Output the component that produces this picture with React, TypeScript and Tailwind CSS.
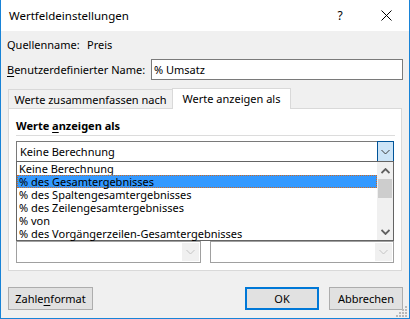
import React from 'react'

const ITEMS = [
  'Keine Berechnung',
  '% des Gesamtergebnisses',
  '% des Spaltengesamtergebnisses',
  '% des Zeilengesamtergebnisses',
  '% von',
  '% des Vorgängerzeilen-Gesamtergebnisses',
]

function Chevron({ color = '#3c3c3c', up = false, bold = false }: { color?: string; up?: boolean; bold?: boolean }) {
  return (
    <svg width="9" height="6" viewBox="0 0 9 6">
      <path
        d={up ? 'M0.5 5 L4.5 1 L8.5 5' : 'M0.5 1 L4.5 5 L8.5 1'}
        fill="none"
        stroke={color}
        strokeWidth={bold ? 1.8 : 1}
      />
    </svg>
  )
}

function DisabledCombo({ width }: { width: string }) {
  return (
    <div className={`${width} h-[22px] border border-[#a0a0a0] bg-white flex justify-end p-px`}>
      <div className="w-[17px] bg-[#f0f0f0] flex items-center justify-center">
        <Chevron color="#c4c4c4" />
      </div>
    </div>
  )
}

export default function App() {
  return (
    <div className="relative w-[410px] h-[319px] flex flex-col bg-[#f0f0f0] border-x border-b border-[#1883d7] overflow-hidden font-['Noto_Sans',sans-serif] text-[11px] text-black">
      {/* Title bar */}
      <div className="h-[31px] shrink-0 bg-white flex items-center">
        <span className="pl-[8px] flex-1 leading-[16px] text-[11.5px]">Wertfeldeinstellungen</span>
        <span className="w-[46px] text-center text-[12px] leading-[16px]">?</span>
        <span className="w-[46px] flex items-center justify-center">
          <svg width="11" height="11" viewBox="0 0 11 11">
            <path d="M0.5 0.5 L10.5 10.5 M10.5 0.5 L0.5 10.5" stroke="#000" strokeWidth="1" />
          </svg>
        </span>
      </div>

      <div className="px-[6px] flex flex-col">
        <div className="mt-[6px] h-[16px] leading-[16px] flex">
          <span className="w-[80px]">Quellenname:</span>
          <span>Preis</span>
        </div>

        <div className="mt-[6px] h-[21px] flex items-center">
          <span className="leading-[16px]">
            <span className="underline underline-offset-2">B</span>enutzerdefinierter Name:
          </span>
          <div className="ml-auto w-[252px] h-[21px] border border-[#7a7a7a] bg-white px-[2px] flex items-center leading-[16px]">
            % Umsatz
          </div>
        </div>

        {/* Tabs */}
        <div className="mt-[7px] h-[21px] flex items-end pl-[1px]">
          <div className="w-[164px] h-[19px] border-t border-l border-[#d9d9d9] flex items-center justify-center pt-[2px] leading-[16px]">
            Werte zusammenfassen nach
          </div>
          <div className="relative z-10 w-[119px] h-[21px] -mb-px bg-white border-x border-t border-[#d9d9d9] flex items-center justify-center leading-[16px]">
            Werte anzeigen als
          </div>
        </div>

        {/* Panel */}
        <div className="ml-[1px] w-[394px] h-[163px] bg-white border border-[#d9d9d9] pl-[7px] pt-[9px] flex flex-col">
          <div className="h-[16px] leading-[16px] font-bold">
            Werte <span className="underline underline-offset-2">a</span>nzeigen als
          </div>
          <div className="mt-[1px] w-[379px] h-px bg-[#dcdcdc]" />

          <div className="relative mt-[5px] w-[378px]">
            <div className="h-[21px] border border-[#7a7a7a] bg-white flex items-center">
              <span className="flex-1 pl-[3px] leading-[16px]">Keine Berechnung</span>
              <div className="w-[17px] h-[21px] -my-px -mr-px bg-[#cce4f7] border border-[#005499] flex items-center justify-center">
                <Chevron />
              </div>
            </div>

            {/* Open list */}
            <div className="absolute left-0 top-[20px] z-20 w-[378px] h-[80px] border border-[#646464] bg-white flex">
              <div className="flex-1 flex flex-col">
                {ITEMS.map((item, i) => (
                  <div
                    key={item}
                    className={
                      i === 1
                        ? 'h-[13px] leading-[11px] pl-[1px] bg-[#3399ff] border border-dotted border-[#d2691e]'
                        : 'h-[13px] leading-[13px] pl-[2px]'
                    }
                  >
                    {item}
                  </div>
                ))}
              </div>
              <div className="w-[16px] bg-[#f0f0f0] flex flex-col">
                <div className="h-[17px] flex items-center justify-center">
                  <Chevron color="#606060" up bold />
                </div>
                <div className="h-[19px] mx-px bg-[#cdcdcd]" />
                <div className="flex-1" />
                <div className="h-[17px] flex items-center justify-center">
                  <Chevron color="#606060" bold />
                </div>
              </div>
            </div>
          </div>

          <div className="mt-[79px] flex gap-[9px]">
            <DisabledCombo width="w-[185px]" />
            <DisabledCombo width="w-[184px]" />
          </div>
        </div>

        {/* Buttons */}
        <div className="mt-[16px] flex pl-[1px]">
          <div className="w-[85px] h-[23px] border border-[#adadad] bg-[#e1e1e1] flex items-center justify-center leading-[16px]">
            Zahle<span className="underline underline-offset-2">n</span>format
          </div>
          <div className="ml-auto w-[74px] h-[23px] border-2 border-[#0078d7] bg-[#e1e1e1] flex items-center justify-center leading-[16px]">
            OK
          </div>
          <div className="ml-[10px] w-[74px] h-[23px] border border-[#adadad] bg-[#e1e1e1] flex items-center justify-center leading-[16px]">
            Abbrechen
          </div>
        </div>
      </div>

      {/* Size grip */}
      <svg className="absolute right-[1px] bottom-[1px]" width="12" height="12" viewBox="0 0 12 12">
        {[
          [10, 2], [10, 5], [7, 5], [10, 8], [7, 8], [4, 8], [10, 11], [7, 11], [4, 11], [1, 11],
        ].map(([x, y]) => (
          <rect key={`${x}-${y}`} x={x - 1} y={y - 1} width="2" height="2" fill="#b8b8b8" />
        ))}
      </svg>
    </div>
  )
}
